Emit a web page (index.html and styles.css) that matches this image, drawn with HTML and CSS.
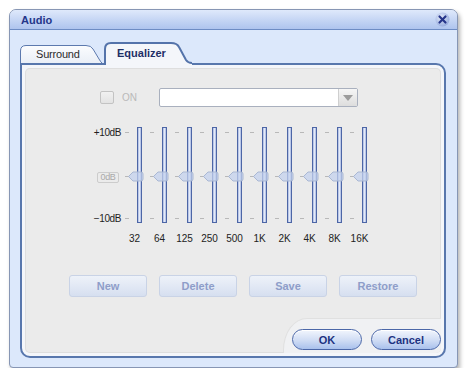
FILE: index.html
```html
<!DOCTYPE html>
<html>
<head>
<meta charset="utf-8">
<title>Audio</title>
<link rel="stylesheet" href="styles.css">
</head>
<body>
<div class="window">
  <div class="titlebar">
    <span class="title">Audio</span>
    <span class="close">
      <svg width="15" height="15" viewBox="0 0 15 15">
        <defs>
          <radialGradient id="cg" cx="40%" cy="35%" r="70%">
            <stop offset="0" stop-color="#e4ebfa"/>
            <stop offset="1" stop-color="#93a9dc"/>
          </radialGradient>
        </defs>
        <circle cx="7.5" cy="7.5" r="7" fill="url(#cg)"/>
        <path d="M4.5 4.5 L10.5 10.5 M10.5 4.5 L4.5 10.5" stroke="#26358a" stroke-width="2.2" stroke-linecap="round"/>
      </svg>
    </span>
  </div>

  <div class="tabs">
    <div class="tab tab-off">
      <svg class="tab-shape" width="82" height="18" viewBox="0 0 82 18">
        <defs>
          <linearGradient id="tg" x1="0" y1="0" x2="0" y2="1">
            <stop offset="0" stop-color="#fbfcfe"/>
            <stop offset="1" stop-color="#eaeff7"/>
          </linearGradient>
        </defs>
        <path d="M0.5 18 V6 Q0.5 0.5 6 0.5 H66 Q71 0.5 73 4 L79 14 Q81 17.5 82 18 Z" fill="url(#tg)"/>
        <path d="M0.5 18 V6 Q0.5 0.5 6 0.5 H66 Q71 0.5 73 4 L79 14 Q81 17.5 82 18" fill="none" stroke="#5c79ae"/>
      </svg>
      <span class="tab-label">Surround</span>
    </div>
    <div class="tab tab-on">
      <svg class="tab-shape" width="88" height="23" viewBox="0 0 88 23">
        <path d="M1 23 V7 Q1 1 7 1 H67 Q73 1 75 5 L82 18 Q84 21 88 21 V23 Z" fill="#f4f6fa"/>
        <path d="M1 23 V7 Q1 1 7 1 H67 Q73 1 75 5 L82 18 Q84 21 88 21" fill="none" stroke="#5473aa" stroke-width="2"/>
      </svg>
      <span class="tab-label">Equalizer</span>
    </div>
  </div>

  <div class="panel">
    <div class="inner">
      <div class="preset-row">
        <div class="onoff">
          <span class="checkbox"></span>
          <span class="on">ON</span>
        </div>
        <div class="select">
          <span class="select-btn">
            <svg width="10" height="6" viewBox="0 0 10 6"><path d="M0 0 H10 L5 6 Z" fill="#9c9c9c"/></svg>
          </span>
        </div>
      </div>

      <div class="eq">
        <div class="db-labels">
          <span class="db">+10dB</span>
          <span class="db-zero">0dB</span>
          <span class="db db-low">−10dB</span>
        </div>
        <div class="band"><div class="slider"><div class="ticks"><i></i><i></i><i></i></div><div class="track"><svg class="thumb" width="16" height="11" viewBox="0 0 16 11"><path d="M0.5 5.5 L5 1 H13 Q15 1 15 3 V8 Q15 10 13 10 H5 Z" fill="rgba(196,210,238,0.75)" stroke="#a9b7d3"/></svg></div></div><span class="freq">32</span></div>
        <div class="band"><div class="slider"><div class="ticks"><i></i><i></i><i></i></div><div class="track"><svg class="thumb" width="16" height="11" viewBox="0 0 16 11"><path d="M0.5 5.5 L5 1 H13 Q15 1 15 3 V8 Q15 10 13 10 H5 Z" fill="rgba(196,210,238,0.75)" stroke="#a9b7d3"/></svg></div></div><span class="freq">64</span></div>
        <div class="band"><div class="slider"><div class="ticks"><i></i><i></i><i></i></div><div class="track"><svg class="thumb" width="16" height="11" viewBox="0 0 16 11"><path d="M0.5 5.5 L5 1 H13 Q15 1 15 3 V8 Q15 10 13 10 H5 Z" fill="rgba(196,210,238,0.75)" stroke="#a9b7d3"/></svg></div></div><span class="freq">125</span></div>
        <div class="band"><div class="slider"><div class="ticks"><i></i><i></i><i></i></div><div class="track"><svg class="thumb" width="16" height="11" viewBox="0 0 16 11"><path d="M0.5 5.5 L5 1 H13 Q15 1 15 3 V8 Q15 10 13 10 H5 Z" fill="rgba(196,210,238,0.75)" stroke="#a9b7d3"/></svg></div></div><span class="freq">250</span></div>
        <div class="band"><div class="slider"><div class="ticks"><i></i><i></i><i></i></div><div class="track"><svg class="thumb" width="16" height="11" viewBox="0 0 16 11"><path d="M0.5 5.5 L5 1 H13 Q15 1 15 3 V8 Q15 10 13 10 H5 Z" fill="rgba(196,210,238,0.75)" stroke="#a9b7d3"/></svg></div></div><span class="freq">500</span></div>
        <div class="band"><div class="slider"><div class="ticks"><i></i><i></i><i></i></div><div class="track"><svg class="thumb" width="16" height="11" viewBox="0 0 16 11"><path d="M0.5 5.5 L5 1 H13 Q15 1 15 3 V8 Q15 10 13 10 H5 Z" fill="rgba(196,210,238,0.75)" stroke="#a9b7d3"/></svg></div></div><span class="freq">1K</span></div>
        <div class="band"><div class="slider"><div class="ticks"><i></i><i></i><i></i></div><div class="track"><svg class="thumb" width="16" height="11" viewBox="0 0 16 11"><path d="M0.5 5.5 L5 1 H13 Q15 1 15 3 V8 Q15 10 13 10 H5 Z" fill="rgba(196,210,238,0.75)" stroke="#a9b7d3"/></svg></div></div><span class="freq">2K</span></div>
        <div class="band"><div class="slider"><div class="ticks"><i></i><i></i><i></i></div><div class="track"><svg class="thumb" width="16" height="11" viewBox="0 0 16 11"><path d="M0.5 5.5 L5 1 H13 Q15 1 15 3 V8 Q15 10 13 10 H5 Z" fill="rgba(196,210,238,0.75)" stroke="#a9b7d3"/></svg></div></div><span class="freq">4K</span></div>
        <div class="band"><div class="slider"><div class="ticks"><i></i><i></i><i></i></div><div class="track"><svg class="thumb" width="16" height="11" viewBox="0 0 16 11"><path d="M0.5 5.5 L5 1 H13 Q15 1 15 3 V8 Q15 10 13 10 H5 Z" fill="rgba(196,210,238,0.75)" stroke="#a9b7d3"/></svg></div></div><span class="freq">8K</span></div>
        <div class="band"><div class="slider"><div class="ticks"><i></i><i></i><i></i></div><div class="track"><svg class="thumb" width="16" height="11" viewBox="0 0 16 11"><path d="M0.5 5.5 L5 1 H13 Q15 1 15 3 V8 Q15 10 13 10 H5 Z" fill="rgba(196,210,238,0.75)" stroke="#a9b7d3"/></svg></div></div><span class="freq">16K</span></div>
      </div>

      <div class="preset-btns">
        <button class="pbtn">New</button>
        <button class="pbtn">Delete</button>
        <button class="pbtn">Save</button>
        <button class="pbtn">Restore</button>
      </div>

      <div class="footer">
        <div class="btnbox">
          <button class="pill">OK</button>
          <button class="pill">Cancel</button>
        </div>
      </div>
    </div>
  </div>
</div>
</body>
</html>
```

FILE: styles.css
```css
body {
  margin: 0;
  background: #ffffff;
  font-family: "Liberation Sans", Arial, sans-serif;
}
.window {
  box-sizing: border-box;
  width: 449px;
  height: 359px;
  margin: 9px 0 0 9px;
  background: #dce8fb;
  border: 1px solid #8796b4;
  border-radius: 7px 7px 4px 4px;
  box-shadow: 2px 3px 4px rgba(0, 0, 0, 0.3);
  overflow: hidden;
}
.titlebar {
  box-sizing: border-box;
  height: 20px;
  display: flex;
  align-items: center;
  justify-content: space-between;
  padding: 0 7px 0 11px;
  background: linear-gradient(#dfe9fb, #aec4ee);
  border-bottom: 1px solid #6d8cc4;
}
.title {
  font-size: 11px;
  font-weight: bold;
  color: #24368a;
}
.close {
  display: flex;
  width: 15px;
  height: 15px;
}

/* tabs */
.tabs {
  height: 33px;
  display: flex;
  align-items: flex-end;
  padding-left: 10px;
  position: relative;
  z-index: 1;
}
.tab {
  position: relative;
}
.tab-shape {
  position: absolute;
  left: 0;
  top: 0;
}
.tab-label {
  position: relative;
  display: block;
  font-size: 11px;
  color: #2b2b2b;
}
.tab-off {
  width: 82px;
  height: 18px;
}
.tab-off .tab-label {
  padding-left: 16px;
  line-height: 19px;
  letter-spacing: -0.2px;
}
.tab-on {
  width: 88px;
  height: 23px;
  margin-left: 2px;
  margin-bottom: -2px;
}
.tab-on .tab-label {
  padding-left: 13px;
  line-height: 22px;
  font-weight: bold;
  color: #1f2f66;
}

/* panel */
.panel {
  box-sizing: border-box;
  height: 295px;
  margin: 0 11px 0 10px;
  padding: 3px;
  background: #f4f6fa;
  border: 2px solid #5877ad;
  border-radius: 0 10px 10px 10px;
}
.inner {
  height: 285px;
  background: #ebebeb;
  border-radius: 5px;
  box-shadow: inset 0 0 0 1px #dedede;
  display: flex;
  flex-direction: column;
  overflow: hidden;
}

.preset-row {
  display: flex;
  align-items: center;
  height: 19px;
  margin-top: 20px;
  padding-left: 75px;
}
.onoff {
  width: 59px;
  display: flex;
  align-items: center;
}
.checkbox {
  box-sizing: border-box;
  width: 14px;
  height: 13px;
  border: 1px solid #c3c3c3;
  border-radius: 2px;
  background: linear-gradient(#f1f1f1, #e3e3e3);
}
.on {
  margin-left: 8px;
  font-size: 10px;
  color: #b9b9b9;
}
.select {
  box-sizing: border-box;
  width: 199px;
  height: 19px;
  background: #ffffff;
  border: 1px solid #a9b0be;
  border-radius: 2px;
  display: flex;
  justify-content: flex-end;
}
.select-btn {
  width: 18px;
  display: flex;
  align-items: center;
  justify-content: center;
  background: linear-gradient(#f6f6f6, #dddddd);
  border-left: 1px solid #cfcfcf;
}

/* equalizer */
.eq {
  display: flex;
  margin-top: 20px;
}
.db-labels {
  box-sizing: border-box;
  width: 99px;
  padding-right: 3px;
  display: flex;
  flex-direction: column;
  align-items: flex-end;
}
.db {
  font-size: 10px;
  line-height: 11px;
  letter-spacing: -0.4px;
  color: #1e1e1e;
}
.db-zero {
  box-sizing: border-box;
  margin-top: 34px;
  margin-right: 2px;
  width: 22px;
  height: 11px;
  border: 1px solid #cccccc;
  border-radius: 2px;
  font-size: 9px;
  line-height: 9px;
  letter-spacing: -0.3px;
  text-align: center;
  color: #a9a9a9;
}
.db-low {
  margin-top: 30px;
}
.band {
  width: 25px;
  display: flex;
  flex-direction: column;
}
.slider {
  display: flex;
  height: 96px;
}
.ticks {
  width: 4px;
  margin-left: 1px;
  display: flex;
  flex-direction: column;
}
.ticks i {
  display: block;
  height: 1px;
  background: #b8b8b8;
  margin-top: 5px;
}
.ticks i:nth-child(2) {
  margin-top: 43px;
}
.ticks i:nth-child(3) {
  margin-top: 41px;
}
.track {
  position: relative;
  box-sizing: border-box;
  width: 5px;
  margin-left: 8px;
  border: 1px solid #4d66a6;
  background: linear-gradient(90deg, #a7b7e0, #e4eaf8, #a7b7e0);
}
.thumb {
  position: absolute;
  left: -10px;
  top: 43px;
}
.freq {
  width: 21px;
  margin-top: 10px;
  line-height: 12px;
  font-size: 10px;
  text-align: center;
  color: #222222;
  white-space: nowrap;
}

.preset-btns {
  display: flex;
  gap: 12px;
  margin-top: 30px;
  padding-left: 44px;
}
.pbtn {
  width: 78px;
  height: 22px;
  padding: 0;
  font-family: "Liberation Sans", Arial, sans-serif;
  font-size: 11px;
  font-weight: bold;
  color: #8e9dc9;
  background: linear-gradient(#eef2f9, #d6dff0);
  border: 1px solid #c9d3e6;
  border-radius: 3px;
}

.footer {
  display: flex;
  justify-content: flex-end;
  margin-top: 21px;
}
.btnbox {
  box-sizing: border-box;
  width: 158px;
  height: 35px;
  padding: 10px 0 0 8px;
  display: flex;
  gap: 9px;
  background: #f0f1f3;
  border-top: 1px solid #e0e0e0;
  border-left: 1px solid #e0e0e0;
  border-top-left-radius: 24px 32px;
}
.pill {
  width: 70px;
  height: 21px;
  padding: 0;
  font-family: "Liberation Sans", Arial, sans-serif;
  font-size: 11px;
  font-weight: bold;
  color: #1d3381;
  background: linear-gradient(#f2f6fd, #cfdcf4 55%, #a9c1ec);
  border: 1px solid #4b67a8;
  border-radius: 11px;
  box-shadow: inset 0 1px 0 #ffffff;
}
```
